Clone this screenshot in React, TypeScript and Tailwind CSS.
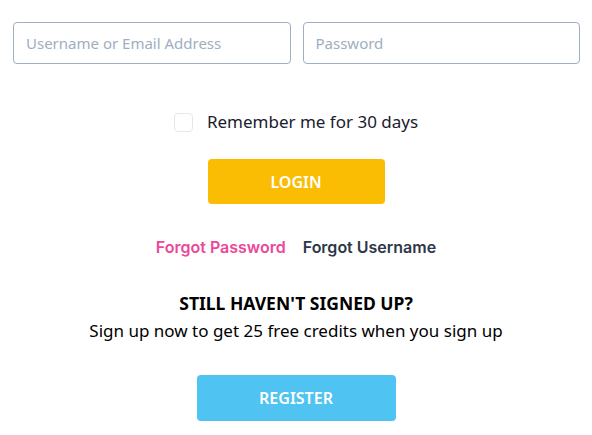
export default function App() {
  return (
    <main className="bg-white w-[592px] h-[435px] overflow-hidden">
      {/* inputs */}
      <div className="flex gap-3 pl-[13px] pr-3 pt-[22px]">
        <input
          type="text"
          placeholder="Username or Email Address"
          className="flex-1 h-[42px] rounded border border-[#a0aec0] px-3 text-[15px] text-[#2d3748] placeholder:text-[#a0aec0] font-['Noto_Sans',sans-serif] outline-none"
        />
        <input
          type="password"
          placeholder="Password"
          className="flex-1 h-[42px] rounded border border-[#a0aec0] px-3 text-[15px] text-[#2d3748] placeholder:text-[#a0aec0] font-['Noto_Sans',sans-serif] outline-none"
        />
      </div>

      {/* remember */}
      <label className="flex items-center justify-center gap-[14px] mt-[46px] font-['Noto_Sans',sans-serif]">
        <span className="w-[19px] h-[19px] rounded border border-[#e2e8f0] bg-white" />
        <span className="text-[17px] text-[#1a202c] leading-6">Remember me for 30 days</span>
      </label>

      <div className="flex justify-center mt-[25px]">
        <button className="w-[177px] h-[45px] rounded bg-[#fbbc04] text-white text-[16px] font-semibold font-['Noto_Sans',sans-serif]">
          LOGIN
        </button>
      </div>

      {/* links */}
      <div className="flex justify-center gap-[17px] mt-[31px] font-['Inter',sans-serif] font-semibold text-[16px]">
        <a className="text-[#ec4899]">Forgot Password</a>
        <a className="text-[#2d3748]">Forgot Username</a>
      </div>

      {/* sign up */}
      <div className="text-center mt-[32px] font-['Noto_Sans',sans-serif] text-black">
        <h2 className="text-[17.5px] font-bold leading-6">STILL HAVEN'T SIGNED UP?</h2>
        <p className="text-[17px] leading-6 mt-[4px]">Sign up now to get 25 free credits when you sign up</p>
      </div>

      <div className="flex justify-center mt-[32px]">
        <button className="w-[199px] h-[46px] rounded bg-[#4fc3f1] text-white text-[16px] font-semibold font-['Noto_Sans',sans-serif]">
          REGISTER
        </button>
      </div>
    </main>
  );
}
